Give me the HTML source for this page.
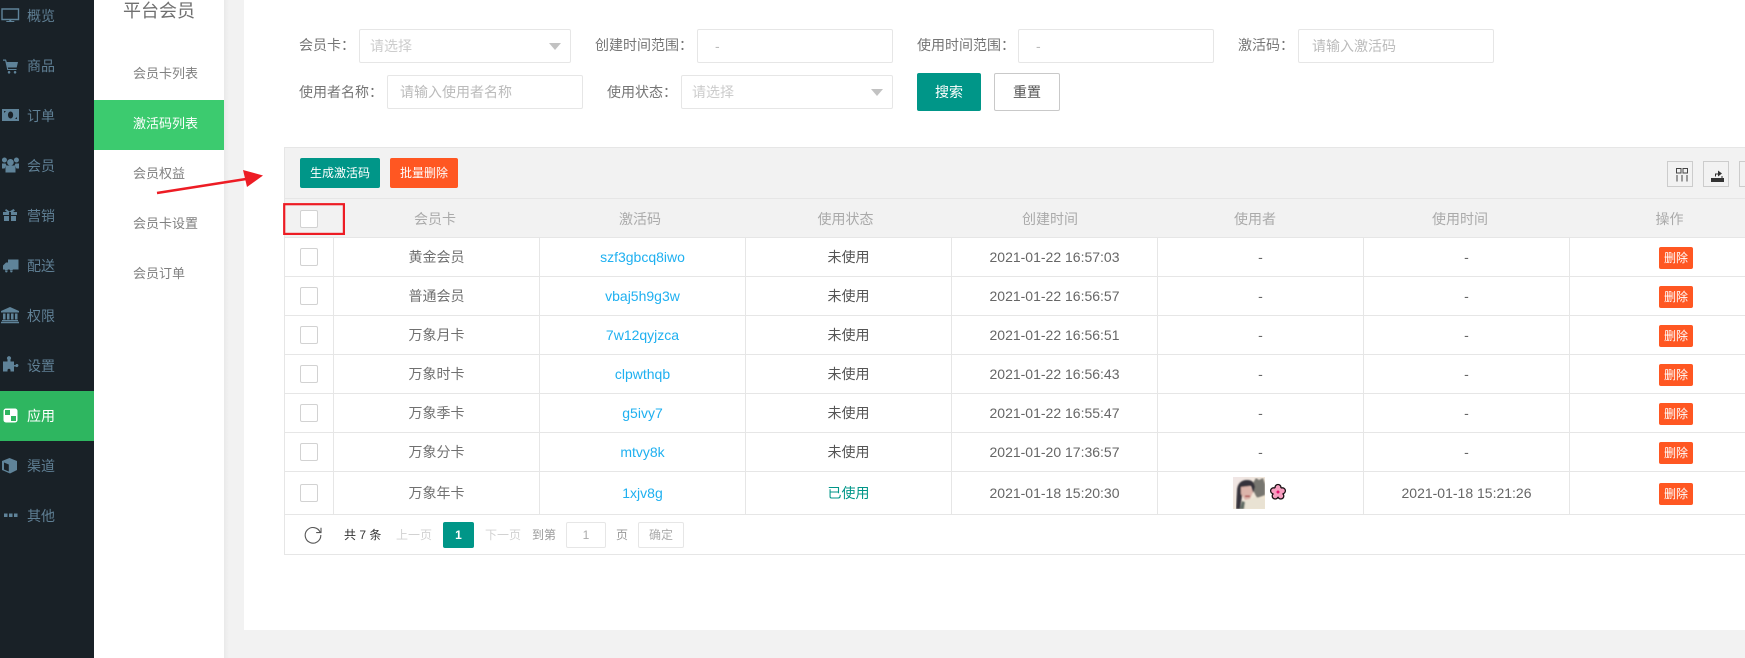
<!DOCTYPE html>
<html lang="zh-CN"><head><meta charset="utf-8"><title>激活码列表</title>
<style>
*{box-sizing:border-box;margin:0;padding:0}
html,body{width:1745px;height:658px;overflow:hidden;background:#f2f2f2;font-family:"Liberation Sans","Noto Sans CJK SC",sans-serif;font-size:14px;color:#666}
.a{position:absolute;white-space:nowrap}
.s{left:27px;width:60px;height:20px;line-height:20px;color:#5f7f94;font-size:14px}
.m{left:133px;height:20px;line-height:20px;font-size:13px;color:#808080}
.l{height:20px;line-height:20px;color:#757575}
.i{height:34px;background:#fff;border:1px solid #e6e6e6;border-radius:2px;line-height:32px;padding-left:10px;color:#bbb}
.ph{color:#ccc}
.tri{position:absolute;right:9px;top:13px;width:0;height:0;border:6px solid transparent;border-top:7px solid #c2c2c2;border-bottom:0}
.h{position:absolute;height:1px;background:#e6e6e6;left:284px;right:0}
.v{position:absolute;width:1px;background:#e6e6e6;top:238px;height:276px}
.cb{position:absolute;left:300px;width:18px;height:18px;background:#fff;border:1px solid #d2d2d2;border-radius:2px}
.c{position:absolute;width:205px;text-align:center;height:20px;line-height:20px}
.hd{color:#aaa;top:209px}
.k{color:#707070}.lk{color:#1fb0f0}.st{color:#555}
.del{position:absolute;left:1659px;width:34px;height:22px;background:#ff5722;border-radius:2px;color:#fff;font-size:12px;line-height:22px;text-align:center}
.tool{position:absolute;top:161px;width:26px;height:26px;border:1px solid #ccc}
.p{height:20px;line-height:20px;font-size:12px}
.b{height:26px;border:1px solid #e6e6e6;border-radius:2px;background:#fff;text-align:center;line-height:24px;font-size:12px;color:#aaa}
</style></head><body>
<!-- left dark sidebar -->
<div class="a" style="left:0;top:0;width:94px;height:658px;background:#192127"></div>
<div class="a" style="left:0;top:391px;width:94px;height:50px;background:#2eb660"></div>
<svg class="a" style="left:0;top:0" width="94" height="658" viewBox="0 0 94 658">
 <g fill="#5f8399">
  <path d="M2 9h16.500v10.500H2z" fill="none" stroke="#5f8399" stroke-width="1.400"/><path d="M9.300 19.500h2v1.500h3v1h-8v-1h3z"/>
  <path d="M3 59.500h3l.8 2.500H18l-1.300 5.500H7.800l.4 1.500h8.300v1H7.300L5.200 60.800H3zM9 71a1.300 1.300 0 1 0 .1 0zM15 71a1.300 1.300 0 1 0 .1 0z"/>
  <path fill-rule="evenodd" d="M2 109h17v12H2zM10.500 111.500a2.600 3.500 0 1 0 .1 0zM4 111h2l-2 2zM17 119h-2l2-2z"/>
  <path d="M10.500 159a3.300 3.300 0 1 1-.1 0zM4.500 157.500a2.500 2.500 0 1 1-.1 0zM16.500 157.500a2.500 2.500 0 1 1-.1 0zM2 163.500h3.500l1 2-2 3H2zM19 163.500h-3.500l-1 2 2 3H19zM6.500 165.500h8l1 2v5h-10v-5z"/>
  <path d="M3 212h6v3H3zM11 212h6v3h-6zM4 216h5v5H4zM11 216h5v5h-5zM6 209l3.500 2.500L13.500 209l1.500 1.500-2 1.500H7l-2-1.500z"/>
  <path d="M8 259.500h10.500v10H13a2 2 0 0 1-3.500 0H8a2 2 0 0 1-3.500 0H3v-4l3-3h2zM6.300 270a1.200 1.200 0 1 0 .1 0zM11.300 270a1.200 1.200 0 1 0 .1 0z"/>
  <path d="M10 307l9 4v1.500H1V311zM3 313.500h2.500v6H3zM7 313.500h2.500v6H7zM11 313.500h2.500v6H11zM15 313.500h2.500v6H15zM2 320h16v1.200H2zM1 321.800h18v1.400H1z"/>
  <path d="M3 361.500h4.500v-2a2 2 0 1 1 3 0v2H14v3.500h1.500a1.500 1.500 0 1 1 2.500 1.500 1.500 1.500 0 0 1-2.500 0H14v5H10.500v-1.800a1.700 1.700 0 0 0-3 0v1.800H3z"/>
  <path d="M9.500 458l7.500 3v9l-7 3.500-8-3.500v-9zM4 462.500v7l4.800 2v-7z"/>
  <path d="M4 513.500h3.500v3.500H4zM9 513.500h3.500v3.500H9zM14 513.500h3.500v3.500H14z"/>
 </g>
 <rect x="3.500" y="408.500" width="14" height="14" rx="2.500" fill="#fff"/>
 <rect x="5" y="410" width="5" height="5" fill="#2eb660"/><rect x="11" y="416" width="5" height="5" fill="#2eb660"/>
</svg>
<div class="a s" style="top:6px">概览</div>
<div class="a s" style="top:56px">商品</div>
<div class="a s" style="top:106px">订单</div>
<div class="a s" style="top:156px">会员</div>
<div class="a s" style="top:206px">营销</div>
<div class="a s" style="top:256px">配送</div>
<div class="a s" style="top:306px">权限</div>
<div class="a s" style="top:356px">设置</div>
<div class="a s" style="top:406px;color:#fff">应用</div>
<div class="a s" style="top:456px">渠道</div>
<div class="a s" style="top:506px">其他</div>
<!-- second sidebar -->
<div class="a" style="left:94px;top:0;width:130px;height:658px;background:#fff"></div>
<div class="a" style="left:224px;top:0;width:5px;height:658px;background:linear-gradient(90deg,#e9e9e9,#f2f2f2)"></div>
<div class="a" style="left:123px;top:-2px;height:26px;line-height:26px;font-size:18px;color:#707070">平台会员</div>
<div class="a" style="left:94px;top:100px;width:130px;height:50px;background:#3ccb6f"></div>
<div class="a m" style="top:64px">会员卡列表</div>
<div class="a m" style="top:114px;color:#fff">激活码列表</div>
<div class="a m" style="top:164px">会员权益</div>
<div class="a m" style="top:214px">会员卡设置</div>
<div class="a m" style="top:264px">会员订单</div>
<!-- main -->
<div class="a" style="left:244px;top:0;width:1501px;height:630px;background:#fff"></div>
<!-- form -->
<div class="a l" style="left:299px;top:35px">会员卡：</div>
<div class="a i ph" style="left:359px;top:29px;width:212px">请选择<span class="tri"></span></div>
<div class="a l" style="left:595px;top:35px">创建时间范围：</div>
<div class="a i" style="left:697px;top:29px;width:196px;padding-left:17px">-</div>
<div class="a l" style="left:917px;top:35px">使用时间范围：</div>
<div class="a i" style="left:1018px;top:29px;width:196px;padding-left:17px">-</div>
<div class="a l" style="left:1238px;top:35px">激活码：</div>
<div class="a i" style="left:1298px;top:29px;width:196px;padding-left:13px">请输入激活码</div>
<div class="a l" style="left:299px;top:82px">使用者名称：</div>
<div class="a i" style="left:387px;top:75px;width:196px;padding-left:12px">请输入使用者名称</div>
<div class="a l" style="left:607px;top:82px">使用状态：</div>
<div class="a i ph" style="left:681px;top:75px;width:212px">请选择<span class="tri"></span></div>
<div class="a" style="left:917px;top:73px;width:64px;height:38px;background:#009688;border-radius:2px;color:#fff;text-align:center;line-height:38px">搜索</div>
<div class="a" style="left:994px;top:73px;width:66px;height:38px;background:#fff;border:1px solid #c9c9c9;border-radius:2px;color:#555;text-align:center;line-height:36px">重置</div>
<!-- table -->
<div class="a" style="left:284px;top:147px;width:1461px;height:91px;background:#f2f2f2"></div>
<div class="h" style="top:147px"></div><div class="h" style="top:198px"></div><div class="h" style="top:237px"></div>
<div class="h" style="top:276px"></div><div class="h" style="top:315px"></div><div class="h" style="top:354px"></div>
<div class="h" style="top:393px"></div><div class="h" style="top:432px"></div><div class="h" style="top:471px"></div>
<div class="h" style="top:514px"></div><div class="h" style="top:554px"></div>
<div class="a" style="left:284px;top:147px;width:1px;height:408px;background:#e6e6e6"></div>
<div class="v" style="left:333px"></div><div class="v" style="left:539px"></div><div class="v" style="left:745px"></div>
<div class="v" style="left:951px"></div><div class="v" style="left:1157px"></div><div class="v" style="left:1363px"></div><div class="v" style="left:1569px"></div>
<div class="a" style="left:300px;top:158px;width:80px;height:30px;background:#009688;border-radius:2px;color:#fff;font-size:12px;text-align:center;line-height:30px">生成激活码</div>
<div class="a" style="left:390px;top:158px;width:68px;height:30px;background:#ff5722;border-radius:2px;color:#fff;font-size:12px;text-align:center;line-height:30px">批量删除</div>
<div class="tool" style="left:1667px"></div><div class="tool" style="left:1703px"></div><div class="tool" style="left:1739px"></div>
<svg class="a" style="left:1667px;top:161px" width="62" height="26" viewBox="0 0 62 26">
 <g fill="none" stroke="#444" stroke-width="1"><path d="M9.500 7.500h4.500v4.500H9.500zM16 7.500h4.500v4.500H16zM10 14v6.500M15 14v6.500M20 14v6.500"/></g>
 <path d="M44 17h13v4H44zM45 15.500h3v-3h3v-3l4 3-4 3v-2h-2v2zM54 15.500h2v1h-2z" fill="#333"/>
</svg>
<div class="c hd" style="left:332.500px">会员卡</div><div class="c hd" style="left:537.500px">激活码</div><div class="c hd" style="left:743px">使用状态</div>
<div class="c hd" style="left:947.500px">创建时间</div><div class="c hd" style="left:1152.500px">使用者</div><div class="c hd" style="left:1357.500px">使用时间</div><div class="c hd" style="left:1570px;width:199px">操作</div>
<div class="cb" style="top:210px"></div>
<!-- row 1 -->
<div class="cb" style="top:248px"></div><div class="c k" style="left:334px;top:247px">黄金会员</div><div class="c lk" style="left:540px;top:247px">szf3gbcq8iwo</div><div class="c st" style="left:746px;top:247px">未使用</div><div class="c" style="left:952px;top:247px">2021-01-22 16:57:03</div><div class="c" style="left:1158px;top:247px">-</div><div class="c" style="left:1364px;top:247px">-</div><div class="del" style="top:247px">删除</div>
<!-- row 2 -->
<div class="cb" style="top:287px"></div><div class="c k" style="left:334px;top:286px">普通会员</div><div class="c lk" style="left:540px;top:286px">vbaj5h9g3w</div><div class="c st" style="left:746px;top:286px">未使用</div><div class="c" style="left:952px;top:286px">2021-01-22 16:56:57</div><div class="c" style="left:1158px;top:286px">-</div><div class="c" style="left:1364px;top:286px">-</div><div class="del" style="top:286px">删除</div>
<!-- row 3 -->
<div class="cb" style="top:326px"></div><div class="c k" style="left:334px;top:325px">万象月卡</div><div class="c lk" style="left:540px;top:325px">7w12qyjzca</div><div class="c st" style="left:746px;top:325px">未使用</div><div class="c" style="left:952px;top:325px">2021-01-22 16:56:51</div><div class="c" style="left:1158px;top:325px">-</div><div class="c" style="left:1364px;top:325px">-</div><div class="del" style="top:325px">删除</div>
<!-- row 4 -->
<div class="cb" style="top:365px"></div><div class="c k" style="left:334px;top:364px">万象时卡</div><div class="c lk" style="left:540px;top:364px">clpwthqb</div><div class="c st" style="left:746px;top:364px">未使用</div><div class="c" style="left:952px;top:364px">2021-01-22 16:56:43</div><div class="c" style="left:1158px;top:364px">-</div><div class="c" style="left:1364px;top:364px">-</div><div class="del" style="top:364px">删除</div>
<!-- row 5 -->
<div class="cb" style="top:404px"></div><div class="c k" style="left:334px;top:403px">万象季卡</div><div class="c lk" style="left:540px;top:403px">g5ivy7</div><div class="c st" style="left:746px;top:403px">未使用</div><div class="c" style="left:952px;top:403px">2021-01-22 16:55:47</div><div class="c" style="left:1158px;top:403px">-</div><div class="c" style="left:1364px;top:403px">-</div><div class="del" style="top:403px">删除</div>
<!-- row 6 -->
<div class="cb" style="top:443px"></div><div class="c k" style="left:334px;top:442px">万象分卡</div><div class="c lk" style="left:540px;top:442px">mtvy8k</div><div class="c st" style="left:746px;top:442px">未使用</div><div class="c" style="left:952px;top:442px">2021-01-20 17:36:57</div><div class="c" style="left:1158px;top:442px">-</div><div class="c" style="left:1364px;top:442px">-</div><div class="del" style="top:442px">删除</div>
<!-- row 7 -->
<div class="cb" style="top:484px"></div><div class="c k" style="left:334px;top:483px">万象年卡</div><div class="c lk" style="left:540px;top:483px">1xjv8g</div><div class="c" style="left:746px;top:483px;color:#009688">已使用</div><div class="c" style="left:952px;top:483px">2021-01-18 15:20:30</div><div class="c" style="left:1364px;top:483px">2021-01-18 15:21:26</div><div class="del" style="top:483px">删除</div>
<svg class="a" style="left:1233px;top:477px" width="54" height="32" viewBox="0 0 54 32">
 <defs><linearGradient id="bg" x1="0" y1="0" x2="1" y2="1"><stop offset="0" stop-color="#f0e6e6"/><stop offset="1" stop-color="#f1e6cf"/></linearGradient>
 <filter id="bl" x="0" y="0" width="1" height="1"><feGaussianBlur stdDeviation="0.700"/></filter>
 <clipPath id="av"><rect width="32" height="32"/></clipPath></defs>
 <rect width="32" height="32" fill="url(#bg)"/>
 <g clip-path="url(#av)"><g filter="url(#bl)">
  <path d="M20 6l3-5 3 2 4-2 2 6v11l-8 3-4-8z" fill="#77766f"/>
  <path d="M3 32l1-18c0-7 4-11 10-11s7 3 8 7l-2 6-2-7-7 1-2 9-2 13z" fill="#35303a"/>
  <path d="M8 10l9-1 3 6-3 7-5 1-4-6z" fill="#dcb4aa"/>
  <path d="M12 18.500h5v1.500h-5z" fill="#a83a3f"/>
  <path d="M7 32l3-8 6-1 6-3 10 2v10z" fill="#e9e2d3"/>
  <path d="M7 32l2-8 3 1-1 7z" fill="#5f6a62"/>
 </g></g>
 <g transform="translate(45 15)">
  <g fill="#f79ec0" stroke="#1a1014" stroke-width="1.300">
   <circle cx="0" cy="-4.500" r="3"/><circle cx="4.400" cy="-1.200" r="3"/><circle cx="2.800" cy="4" r="3"/><circle cx="-2.800" cy="4" r="3"/><circle cx="-4.400" cy="-1.200" r="3"/>
  </g>
  <circle r="4.800" fill="#f79ec0"/><circle r="1.500" fill="#e6156f"/>
 </g>
</svg>
<!-- pagination -->
<svg class="a" style="left:304px;top:526px" width="18" height="18" viewBox="0 0 18 18"><path d="M16.200 6.300A7.800 7.800 0 1 0 16.800 9" fill="none" stroke="#555" stroke-width="1.100"/><path d="M17 1.800v4.800h-4.800" fill="none" stroke="#555" stroke-width="1.100"/></svg>
<div class="a p" style="left:344px;top:525px;color:#333">共 7 条</div>
<div class="a p" style="left:396px;top:525px;color:#d2d2d2">上一页</div>
<div class="a" style="left:443px;top:522px;width:31px;height:26px;background:#009688;border-radius:2px;color:#fff;font-size:12px;font-weight:bold;text-align:center;line-height:26px">1</div>
<div class="a p" style="left:485px;top:525px;color:#d2d2d2">下一页</div>
<div class="a p" style="left:532px;top:525px;color:#999">到第</div>
<div class="a b" style="left:566px;top:522px;width:40px">1</div>
<div class="a p" style="left:616px;top:525px;color:#999">页</div>
<div class="a b" style="left:638px;top:522px;width:46px">确定</div>
<!-- annotations -->
<svg class="a" style="left:0;top:0" width="400" height="260" viewBox="0 0 400 260">
 <rect x="284.200" y="204.200" width="59.700" height="29.700" fill="none" stroke="#ed1c24" stroke-width="2.200"/>
 <path d="M157 193L246 179" fill="none" stroke="#ed1c24" stroke-width="2.600"/>
 <path d="M243 170L263 175.500 247 187z" fill="#ed1c24"/>
</svg>
</body></html>
